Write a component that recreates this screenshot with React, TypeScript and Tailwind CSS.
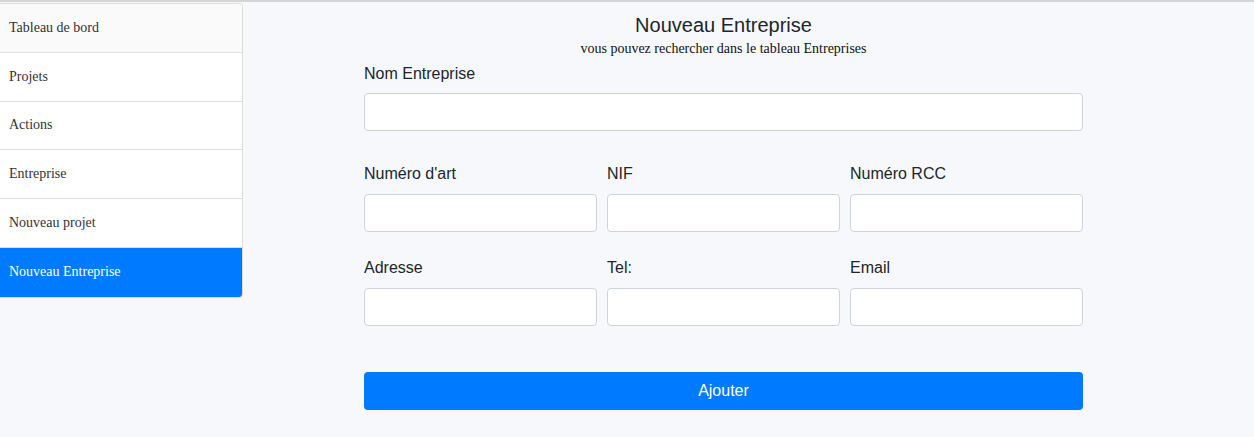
import React from 'react'

const menu = ['Tableau de bord', 'Projets', 'Actions', 'Entreprise', 'Nouveau projet', 'Nouveau Entreprise']

function Field({ label, className = '', gap = 'mb-2' }: { label: string; className?: string; gap?: string }) {
  return (
    <div className={className}>
      <label className={'block text-[16px] leading-6 text-[#212529] ' + gap}>{label}</label>
      <input type="text" className="block w-full h-[38px] bg-white border border-[#ced4da] rounded" />
    </div>
  )
}

export default function App() {
  return (
    <div className="w-[1254px] h-[437px] bg-[#f7f8fc] border-t-2 border-[#d4d4d4] flex overflow-hidden" style={{ fontFamily: '"Liberation Sans", Arial, sans-serif' }}>
      <aside className="w-[243px] self-start bg-white border border-l-0 border-[#dcdcdc] rounded-r overflow-hidden mt-px" style={{ fontFamily: '"Liberation Serif", "Times New Roman", serif' }}>
        {menu.map((item, i) => {
          const active = i === menu.length - 1
          return (
            <div
              key={item}
              className={
                'flex items-center px-[9px] pb-px text-[14px] ' +
                (active ? 'h-[48.8px] bg-[#007bff] text-white' : i === 0 ? 'h-[48.8px] bg-[#fafafa] text-[#333] border-b border-[#dedede]' : 'h-[48.8px] bg-white text-[#333] border-b border-[#dedede]')
              }
            >
              {item}
            </div>
          )
        })}
      </aside>
      <main className="flex-1 flex justify-start pl-[121px]">
        <div className="w-[719px]">
          <div className="text-center pt-[11px]">
            <h1 className="text-[20px] leading-6 text-[#212529]">Nouveau Entreprise</h1>
            <p className="text-[14px] leading-4 text-[#111] mt-[4px]" style={{ fontFamily: '"Liberation Serif", "Times New Roman", serif' }}>
              vous pouvez rechercher dans le tableau Entreprises
            </p>
          </div>
          <Field label="Nom Entreprise" className="mt-[5px]" gap="mb-[7px]" />
          <div className="grid grid-cols-3 gap-x-[10px] mt-[31px]">
            <Field label="Numéro d'art" />
            <Field label="NIF" />
            <Field label="Numéro RCC" />
          </div>
          <div className="grid grid-cols-3 gap-x-[10px] mt-[24px]">
            <Field label="Adresse" />
            <Field label="Tel:" />
            <Field label="Email" />
          </div>
          <button className="mt-[46px] w-full h-[38px] bg-[#007bff] text-white text-[16px] rounded">Ajouter</button>
        </div>
      </main>
    </div>
  )
}
